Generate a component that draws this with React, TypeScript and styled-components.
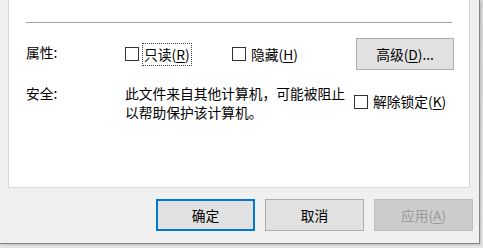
import React from "react";
import styled, { createGlobalStyle } from "styled-components";

const GlobalStyle = createGlobalStyle`
  html, body {
    margin: 0;
    padding: 0;
    background: #dcdcdc;
  }
  body {
    font-family: "Noto Sans CJK SC", "Microsoft YaHei", sans-serif;
    font-size: 13.75px;
    color: #000;
  }
`;

const Page = styled.div`
  width: 483px;
  height: 248px;
  overflow: hidden;
  background: linear-gradient(to bottom, #dadada, #e6e6e6);
`;

const Window = styled.div`
  width: 480px;
  height: 244px;
  box-sizing: border-box;
  background: #f0f0f0;
  border-right: 1px solid #858585;
  border-bottom: 1px solid #858585;
  box-shadow: 1px 1px 2px rgba(0, 0, 0, 0.18);
  display: flex;
  flex-direction: column;
`;

const Panel = styled.div`
  height: 188px;
  box-sizing: border-box;
  margin: 0 9px 0 8px;
  background: #fff;
  border: 1px solid #d9d9d9;
  border-top: none;
  padding: 22px 14px 0 17px;
`;

const Separator = styled.div`
  height: 1px;
  background: #a0a0a0;
  margin-right: 3px;
`;

const Row = styled.div<{ $top: number }>`
  display: grid;
  grid-template-columns: 99px 1fr;
  margin-top: ${(p) => p.$top}px;
`;

const RowLabel = styled.div<{ $centered?: boolean }>`
  line-height: 19px;
  align-self: ${(p) => (p.$centered ? "center" : "start")};
  padding-bottom: ${(p) => (p.$centered ? 3 : 0)}px;
`;

const AttributeGrid = styled.div`
  display: grid;
  grid-template-columns: 107px 124px 98px;
  align-items: center;
  height: 32px;
`;

const SecurityContent = styled.div`
  display: flex;
  align-items: center;
`;

const Message = styled.div`
  width: 229px;
  line-height: 19px;
`;

const CheckItem = styled.label<{ $shift?: number }>`
  display: flex;
  align-items: center;
  white-space: nowrap;
  padding-bottom: ${(p) => p.$shift ?? 0}px;
`;

const Box = styled.span`
  width: 14px;
  height: 14px;
  box-sizing: border-box;
  border: 1px solid #333;
  background: #fff;
  flex: none;
`;

const CheckText = styled.span<{ $focused?: boolean }>`
  margin-left: 3px;
  padding: 0 1px;
  line-height: 21px;
  border: 1px dotted ${(p) => (p.$focused ? "#444" : "transparent")};
`;

const Key = styled.u`
  text-underline-offset: 2px;
`;

const Button = styled.button<{ $primary?: boolean }>`
  width: 99px;
  height: 32px;
  box-sizing: border-box;
  padding: 0;
  font: inherit;
  color: #000;
  background: #e1e1e1;
  border: ${(p) => (p.$primary ? "2px solid #0078d7" : "1px solid #adadad")};
  border-radius: 0;
  &:disabled {
    background: #cccccc;
    border-color: #bfbfbf;
    color: #9a9a9a;
  }
`;

const AdvancedButton = styled(Button)`
  width: 98px;
`;

const Footer = styled.div`
  display: flex;
  justify-content: flex-end;
  gap: 10px;
  margin-top: 11px;
  padding-right: 6px;
`;

export default function App() {
  return (
    <>
      <GlobalStyle />
      <Page>
        <Window>
          <Panel>
            <Separator />
            <Row $top={15}>
              <RowLabel $centered>属性:</RowLabel>
              <AttributeGrid>
                <CheckItem>
                  <Box />
                  <CheckText $focused>
                    只读(<Key>R</Key>)
                  </CheckText>
                </CheckItem>
                <CheckItem>
                  <Box />
                  <CheckText>
                    隐藏(<Key>H</Key>)
                  </CheckText>
                </CheckItem>
                <AdvancedButton>
                  高级(<Key>D</Key>)...
                </AdvancedButton>
              </AttributeGrid>
            </Row>
            <Row $top={14}>
              <RowLabel>安全:</RowLabel>
              <SecurityContent>
                <Message>
                  此文件来自其他计算机，可能被阻止
                  <br />
                  以帮助保护该计算机。
                </Message>
                <CheckItem $shift={3}>
                  <Box />
                  <CheckText>
                    解除锁定(<Key>K</Key>)
                  </CheckText>
                </CheckItem>
              </SecurityContent>
            </Row>
          </Panel>
          <Footer>
            <Button $primary>确定</Button>
            <Button>取消</Button>
            <Button disabled>
              应用(<Key>A</Key>)
            </Button>
          </Footer>
        </Window>
      </Page>
    </>
  );
}
